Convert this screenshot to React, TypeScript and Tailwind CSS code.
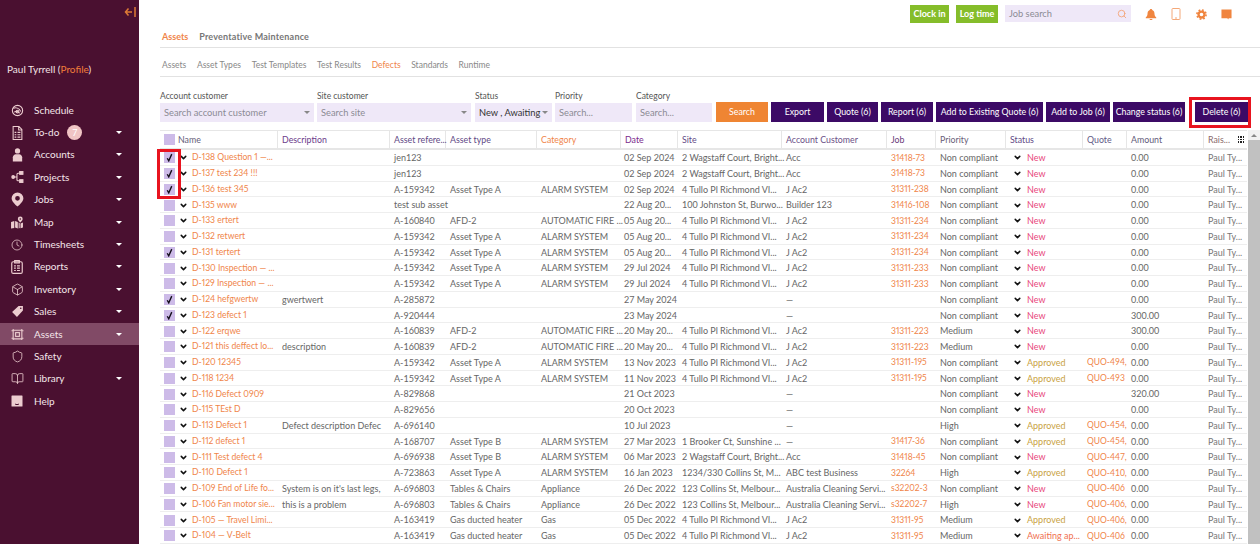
import { BookOpen, Box, ChevronDown, Clock, Search, Shield } from "lucide-react";

const orange = "text-[#f0854a]";

const gridCols =
  "grid grid-cols-[118px_112px_56px_91px_84px_57px_104px_105px_49px_70px_77px_44px_77px_43px]";

function ScheduleIcon() {
  return (
    <svg width="13" height="13" viewBox="0 0 24 24" fill="none" stroke="currentColor" strokeWidth="2">
      <circle cx="12" cy="12" r="9.500" />
      <path d="M4 8c5-2 11 0 14 6M6 15c3-2 7-2 10 2" />
      <circle cx="12" cy="14" r="2.500" />
    </svg>
  );
}

function TodoIcon() {
  return (
    <svg width="11" height="14" viewBox="0 0 18 24" fill="none" stroke="currentColor" strokeWidth="1.800">
      <path d="M1.500 1h10l5 5v17h-15zM11 1v6h5.500" />
      <path d="M4 11h3M9 11h5M4 15h3M9 15h5M4 19h3M9 19h5" strokeWidth="2" />
    </svg>
  );
}

function PersonIcon() {
  return (
    <svg width="11" height="14" viewBox="0 0 18 24" fill="currentColor">
      <circle cx="9" cy="5" r="4.500" />
      <path d="M1 23v-7c0-3 2.500-5.500 5-5.500h6c2.500 0 5 2.500 5 5.500v7z" />
    </svg>
  );
}

function ProjectsIcon() {
  return (
    <svg width="13" height="12" viewBox="0 0 24 22" fill="none" stroke="currentColor" strokeWidth="2">
      <path d="M5 11h5M16 4h-3a2 2 0 0 0-2 2v10a2 2 0 0 0 2 2h3" />
      <circle cx="4" cy="11" r="2.500" fill="currentColor" />
      <rect x="16" y="1" width="6" height="5" fill="currentColor" />
      <rect x="16" y="16" width="6" height="5" fill="currentColor" />
    </svg>
  );
}

function PinIcon() {
  return (
    <svg width="13" height="15" viewBox="0 0 22 24" fill="currentColor">
      <path fillRule="evenodd" d="M11 0a10 10 0 0 0-10 10c0 6.500 10 14 10 14s10-7.500 10-14a10 10 0 0 0-10-10zm0 6a4 4 0 1 1 0 8 4 4 0 0 1 0-8z" />
    </svg>
  );
}

function MapPinsIcon() {
  return (
    <svg width="14" height="13" viewBox="0 0 24 24" fill="currentColor">
      <path d="M1 11l6-2v13l-6 1zM8.500 9l5 2v12l-5-2zM15 12l2 1v9l-2 1zM18.500 14l4.500-2v9l-4.500 1.500z" />
      <path fillRule="evenodd" d="M18 1a4.500 4.500 0 0 0-4.500 4.500c0 3 4.500 6.500 4.500 6.500s4.500-3.500 4.500-6.500A4.500 4.500 0 0 0 18 1zm0 3a1.500 1.500 0 1 1 0 3 1.500 1.500 0 0 1 0-3z" />
    </svg>
  );
}

function ReportIcon() {
  return (
    <svg width="12" height="14" viewBox="0 0 20 24" fill="none" stroke="currentColor" strokeWidth="2">
      <rect x="1" y="3" width="18" height="20" rx="2.500" />
      <path d="M6 1h8v4H6zM5 10h3M10 10h5M5 14h3M10 14h5M5 18h3M10 18h5" />
    </svg>
  );
}

function TagIcon() {
  return (
    <svg width="13" height="13" viewBox="0 0 24 24" fill="currentColor">
      <path fillRule="evenodd" d="M14 2h8v8L11 22 2 13zm4 2.500a1.500 1.500 0 1 0 0 3 1.500 1.500 0 0 0 0-3z" />
    </svg>
  );
}

function AssetsIcon() {
  return (
    <svg width="13" height="13" viewBox="0 0 24 24" fill="none" stroke="currentColor" strokeWidth="2">
      <path d="M1 5h3M1 19h3M20 5h3M20 19h3M4 2v20M20 2v20M4 4h16M4 20h16" />
      <rect x="8.500" y="8.500" width="7" height="7" />
    </svg>
  );
}

function HelpIcon() {
  return (
    <svg width="12" height="12" viewBox="0 0 24 24" fill="currentColor">
      <path d="M2 1h20a1 1 0 0 1 1 1v20a1 1 0 0 1-1 1H2a1 1 0 0 1-1-1V2a1 1 0 0 1 1-1z" />
      <path d="M8 18c2 1.500 6 1.500 8 0" fill="none" stroke="#4a1030" strokeWidth="2" />
    </svg>
  );
}

const navItems = [
  { label: "Schedule", icon: <ScheduleIcon />, caret: false },
  { label: "To-do", icon: <TodoIcon />, caret: true, badge: "7" },
  { label: "Accounts", icon: <PersonIcon />, caret: true },
  { label: "Projects", icon: <ProjectsIcon />, caret: true },
  { label: "Jobs", icon: <PinIcon />, caret: true },
  { label: "Map", icon: <MapPinsIcon />, caret: true },
  { label: "Timesheets", icon: <Clock size={12} strokeWidth={1.5} />, caret: true },
  { label: "Reports", icon: <ReportIcon />, caret: true },
  { label: "Inventory", icon: <Box size={13} strokeWidth={1.5} />, caret: true },
  { label: "Sales", icon: <TagIcon />, caret: true },
  { label: "Assets", icon: <AssetsIcon />, caret: true, active: true },
  { label: "Safety", icon: <Shield size={13} strokeWidth={1.5} />, caret: false },
  { label: "Library", icon: <BookOpen size={13} strokeWidth={1.5} />, caret: true },
  { label: "Help", icon: <HelpIcon />, caret: false },
];

type Row = {
  name: string;
  desc?: string;
  ref: string;
  type?: string;
  cat?: string;
  date: string;
  site?: string;
  acc?: string;
  job?: string;
  pri: string;
  status: string;
  quote?: string;
  amount: string;
  checked?: boolean;
};

const wag = "2 Wagstaff Court, Bright...";
const tullo = "4 Tullo Pl Richmond VI...";
const collins = "123 Collins St, Melbour...";
const nc = "Non compliant";
const alarm = "ALARM SYSTEM";

const rows: Row[] = [
  { name: "D-138 Question 1 —...", ref: "jen123", date: "02 Sep 2024", site: wag, acc: "Acc", job: "31418-73", pri: nc, status: "New", amount: "0.00", checked: true },
  { name: "D-137 test 234 !!!", ref: "jen123", date: "02 Sep 2024", site: wag, acc: "Acc", job: "31418-73", pri: nc, status: "New", amount: "0.00", checked: true },
  { name: "D-136 test 345", ref: "A-159342", type: "Asset Type A", cat: alarm, date: "02 Sep 2024", site: tullo, acc: "J Ac2", job: "31311-238", pri: nc, status: "New", amount: "0.00", checked: true },
  { name: "D-135 www", ref: "test sub asset", date: "22 Aug 20...", site: "100 Johnston St, Burwo...", acc: "Builder 123", job: "31416-108", pri: nc, status: "New", amount: "0.00" },
  { name: "D-133 ertert", ref: "A-160840", type: "AFD-2", cat: "AUTOMATIC FIRE ...", date: "05 Aug 20...", site: tullo, acc: "J Ac2", job: "31311-234", pri: nc, status: "New", amount: "0.00" },
  { name: "D-132 retwert", ref: "A-159342", type: "Asset Type A", cat: alarm, date: "05 Aug 20...", site: tullo, acc: "J Ac2", job: "31311-234", pri: nc, status: "New", amount: "0.00" },
  { name: "D-131 tertert", ref: "A-159342", type: "Asset Type A", cat: alarm, date: "05 Aug 20...", site: tullo, acc: "J Ac2", job: "31311-234", pri: nc, status: "New", amount: "0.00", checked: true },
  { name: "D-130 Inspection — ...", ref: "A-159342", type: "Asset Type A", cat: alarm, date: "29 Jul 2024", site: tullo, acc: "J Ac2", job: "31311-233", pri: nc, status: "New", amount: "0.00" },
  { name: "D-129 Inspection — ...", ref: "A-159342", type: "Asset Type A", cat: alarm, date: "29 Jul 2024", site: tullo, acc: "J Ac2", job: "31311-233", pri: nc, status: "New", amount: "0.00" },
  { name: "D-124 hefgwertw", desc: "gwertwert", ref: "A-285872", date: "27 May 2024", acc: "—", pri: nc, status: "New", amount: "0.00", checked: true },
  { name: "D-123 defect 1", ref: "A-920444", date: "23 May 2024", acc: "—", pri: nc, status: "New", amount: "300.00", checked: true },
  { name: "D-122 erqwe", ref: "A-160839", type: "AFD-2", cat: "AUTOMATIC FIRE ...", date: "20 May 20...", site: tullo, acc: "J Ac2", job: "31311-223", pri: "Medium", status: "New", amount: "300.00" },
  { name: "D-121 this deffect lo...", desc: "description", ref: "A-160839", type: "AFD-2", cat: "AUTOMATIC FIRE ...", date: "20 May 20...", site: tullo, acc: "J Ac2", job: "31311-223", pri: "Medium", status: "New", amount: "0.00" },
  { name: "D-120 12345", ref: "A-159342", type: "Asset Type A", cat: alarm, date: "13 Nov 2023", site: tullo, acc: "J Ac2", job: "31311-195", pri: nc, status: "Approved", quote: "QUO-494,", amount: "0.00" },
  { name: "D-118 1234", ref: "A-159342", type: "Asset Type A", cat: alarm, date: "11 Nov 2023", site: tullo, acc: "J Ac2", job: "31311-195", pri: nc, status: "Approved", quote: "QUO-493", amount: "0.00" },
  { name: "D-116 Defect 0909", ref: "A-829868", date: "21 Oct 2023", acc: "—", pri: nc, status: "New", amount: "320.00" },
  { name: "D-115 TEst D", ref: "A-829656", date: "20 Oct 2023", acc: "—", pri: nc, status: "New", amount: "0.00" },
  { name: "D-113 Defect 1", desc: "Defect description Defec", ref: "A-696140", date: "10 Jul 2023", acc: "—", pri: "High", status: "Approved", quote: "QUO-454,", amount: "0.00" },
  { name: "D-112 defect 1", ref: "A-168707", type: "Asset Type B", cat: alarm, date: "27 Mar 2023", site: "1 Brooker Ct, Sunshine ...", acc: "—", job: "31417-36", pri: nc, status: "Approved", quote: "QUO-454,", amount: "0.00" },
  { name: "D-111 Test defect 4", ref: "A-696938", type: "Asset Type B", cat: alarm, date: "06 Mar 2023", site: wag, acc: "Acc", job: "31418-45", pri: nc, status: "New", quote: "QUO-447,", amount: "0.00" },
  { name: "D-110 Defect 1", ref: "A-723863", type: "Asset Type A", cat: alarm, date: "16 Jan 2023", site: "1234/330 Collins St, M...", acc: "ABC test Business", job: "32264", pri: "High", status: "Approved", quote: "QUO-410,", amount: "0.00" },
  { name: "D-109 End of Life fo...", desc: "System is on it's last legs,", ref: "A-696803", type: "Tables & Chairs", cat: "Appliance", date: "26 Dec 2022", site: collins, acc: "Australia Cleaning Servi...", job: "s32202-3", pri: nc, status: "New", quote: "QUO-406", amount: "0.00" },
  { name: "D-106 Fan motor sie...", desc: "this is a problem", ref: "A-696803", type: "Tables & Chairs", cat: "Appliance", date: "26 Dec 2022", site: collins, acc: "Australia Cleaning Servi...", job: "s32202-7", pri: "High", status: "New", quote: "QUO-406,", amount: "0.00" },
  { name: "D-105 — Travel Limi...", ref: "A-163419", type: "Gas ducted heater", cat: "Gas", date: "05 Dec 2022", site: tullo, acc: "J Ac2", job: "31311-95", pri: "Medium", status: "Approved", quote: "QUO-406,", amount: "0.00" },
  { name: "D-104 — V-Belt", ref: "A-163419", type: "Gas ducted heater", cat: "Gas", date: "05 Dec 2022", site: tullo, acc: "J Ac2", job: "31311-95", pri: "Medium", status: "Awaiting ap...", quote: "QUO-406", amount: "0.00" },
];

const statusColor: Record<string, string> = {
  New: "text-[#e8487c]",
  Approved: "text-[#c9a23f]",
  "Awaiting ap...": "text-[#f0704f]",
};

const headers = [
  { label: "Asset refere...", color: "text-[#5f4a86]" },
  { label: "Asset type", color: "text-[#5f4a86]" },
  { label: "Category", color: orange },
  { label: "Date", color: "text-[#7b2a8c]" },
  { label: "Site", color: "text-[#5f4a86]" },
  { label: "Account Customer", color: "text-[#6b4f86]" },
  { label: "Job", color: "text-[#6b3a7a]" },
  { label: "Priority", color: "text-[#6b6078]" },
  { label: "Status", color: "text-[#5f4a86]" },
  { label: "Quote", color: "text-[#5f5a86]" },
  { label: "Amount", color: "text-[#5f5a7a]" },
];

function Box2({ checked }: { checked?: boolean }) {
  return (
    <span className="flex h-[11px] w-[11px] shrink-0 items-center justify-center bg-[#cdbbe8]">
      {checked && (
        <svg width="9" height="9" viewBox="0 0 12 12" fill="none" stroke="#15101c" strokeWidth="1.800">
          <path d="M3 7l2 3.500L9 1.500" />
        </svg>
      )}
    </span>
  );
}

function Caret() {
  return <span className="block h-0 w-0 border-x-[3.500px] border-t-[3.500px] border-x-transparent border-t-white" />;
}

function Field({ label, placeholder, width, caret, dark }: { label: string; placeholder: string; width: string; caret?: boolean; dark?: boolean }) {
  return (
    <div className={`flex flex-col ${width}`}>
      <span className="mb-[1px] h-[12px] text-[8.500px] leading-[12px] text-[#555]">{label}</span>
      <div className="flex h-[19px] items-center justify-between bg-[#efe8f8] px-[4px]">
        <span className={`whitespace-nowrap text-[9.300px] ${dark ? "text-[#333]" : "text-[#8b8b94]"}`}>{placeholder}</span>
        {caret && <span className="h-0 w-0 shrink-0 border-x-[3px] border-t-[3px] border-x-transparent border-t-[#888]" />}
      </div>
    </div>
  );
}

function ActionButton({ children, width }: { children: string; width: string }) {
  return (
    <button className={`flex h-[20px] items-center justify-center whitespace-nowrap bg-[#3c0a66] text-[8.800px] text-white ${width}`}>
      {children}
    </button>
  );
}

export default function App() {
  return (
    <div className="flex h-[544px] w-[1260px] overflow-hidden bg-white font-['Lato',sans-serif]">
      {/* Sidebar */}
      <aside className="flex w-[139px] shrink-0 flex-col bg-[#4a1030] text-[#eccccf]">
        <div className="flex h-[24px] items-center justify-end pr-[3px]">
          <svg width="12" height="10" viewBox="0 0 12 10" fill="none" stroke="#dd7a35" strokeWidth="1.500">
            <path d="M8 5H1.500M4.500 1.500L1.500 5l3 3.500" />
            <path d="M11 0v10" />
          </svg>
        </div>
        <div className="mt-[38px] h-[14px] pl-[7px] text-[10px] leading-[14px] text-[#f3e3e6]">
          Paul Tyrrell (<span className="text-[#ef7d3a]">Profile</span>)
        </div>
        <nav className="mt-[23px] flex flex-col">
          {navItems.map((item) => (
            <div
              key={item.label}
              className={`flex h-[22.400px] items-center pl-[9px] pr-[17px] ${item.active ? "bg-[#814a66]" : ""}`}
            >
              <span className="mr-[9px] flex w-[16px] shrink-0 justify-center">{item.icon}</span>
              <span className="text-[10px] text-[#f4e6ea]">{item.label}</span>
              {item.badge && (
                <span className="ml-[8px] flex h-[15px] w-[15px] items-center justify-center rounded-full bg-[#f0c4c4] text-[9px] text-white">
                  {item.badge}
                </span>
              )}
              <span className="ml-auto flex">{item.caret && <Caret />}</span>
            </div>
          ))}
        </nav>
      </aside>

      {/* Main */}
      <main className="relative flex min-w-0 flex-1 flex-col pl-[21px]">
        <div className="flex h-[28px] items-start justify-end pr-[28px] pt-[5px]">
          <button className="flex h-[18px] w-[39px] items-center justify-center bg-[#85bd2a] text-[9px] font-bold text-white">Clock in</button>
          <button className="ml-[7px] flex h-[18px] w-[42px] items-center justify-center bg-[#85bd2a] text-[9px] font-bold text-white">Log time</button>
          <div className="ml-[7px] flex h-[17px] w-[126px] items-center justify-between bg-[#efe8f8] px-[4px]">
            <span className="text-[9.300px] text-[#8b8b94]">Job search</span>
            <Search size={10} className="text-[#f4a070]" />
          </div>
          <div className="ml-[14px] flex h-[18px] w-[87px] items-center justify-between text-[#f0853f]">
            <svg width="12" height="11" viewBox="0 0 24 22" fill="currentColor">
              <path d="M12 0c1.500 0 2.500 1 2.500 2.200C18 3.500 19 6.500 19 10c0 3 1.500 5 3.500 7v1.500h-21V17c2-2 3.500-4 3.500-7 0-3.500 1-6.500 4.500-7.800C9.500 1 10.500 0 12 0zM9 20h6c0 1.200-1.300 2-3 2s-3-.8-3-2z" />
            </svg>
            <svg width="10" height="12" viewBox="0 0 20 24" fill="none" stroke="#f4a878" strokeWidth="2">
              <rect x="2" y="1" width="16" height="22" rx="1.500" />
              <path d="M8 20h4" />
            </svg>
            <svg width="11" height="11" viewBox="0 0 24 24" fill="none" stroke="currentColor">
              <circle cx="12" cy="12" r="6.500" strokeWidth="5" />
              <circle cx="12" cy="12" r="10" strokeWidth="3.500" strokeDasharray="3.850 4" />
            </svg>
            <svg width="11" height="11" viewBox="0 0 24 24" fill="currentColor">
              <path d="M1 1h22v19h-6l-1.500 3-1.500-3H1z" />
            </svg>
          </div>
        </div>

        <div className="flex h-[20px] items-start gap-[11px] border-b border-[#e2e2e2] pl-[2px] pt-[2px] text-[9px] font-bold">
          <span className={orange}>Assets</span>
          <span className="tracking-[0.2px] text-[#777]">Preventative Maintenance</span>
        </div>
        <div className="flex h-[29px] items-center gap-[10.600px] border-b border-[#e2e2e2] pl-[2px] pt-[6px] text-[8.500px] text-[#888]">
          <span>Assets</span>
          <span>Asset Types</span>
          <span>Test Templates</span>
          <span>Test Results</span>
          <span className={orange}>Defects</span>
          <span>Standards</span>
          <span>Runtime</span>
        </div>

        {/* Filters */}
        <div className="mt-[13px] flex h-[32px] items-end">
          <Field label="Account customer" placeholder="Search account customer" width="w-[154px]" caret />
          <div className="w-[3px]" />
          <Field label="Site customer" placeholder="Search site" width="w-[154px]" caret />
          <div className="w-[4px]" />
          <Field label="Status" placeholder="New , Awaiting" width="w-[77px]" caret dark />
          <div className="w-[3px]" />
          <Field label="Priority" placeholder="Search..." width="w-[77px]" />
          <div className="w-[4px]" />
          <Field label="Category" placeholder="Search..." width="w-[76px]" />
          <div className="flex items-center gap-[3px] pl-[4px]">
            <button className="flex h-[20px] w-[52px] items-center justify-center bg-[#ef8533] text-[8.800px] text-white">Search</button>
            <ActionButton width="w-[53px]">Export</ActionButton>
            <ActionButton width="w-[51px]">Quote (6)</ActionButton>
            <ActionButton width="w-[52px]">Report (6)</ActionButton>
            <ActionButton width="w-[107px]">Add to Existing Quote (6)</ActionButton>
            <ActionButton width="w-[64px]">Add to Job (6)</ActionButton>
            <ActionButton width="w-[72px]">Change status (6)</ActionButton>
            <div className="w-[4px]" />
            <ActionButton width="w-[53px]">Delete (6)</ActionButton>
          </div>
        </div>

        {/* Table */}
        <div className="mt-[8px] flex min-h-0 flex-1">
          <div className="w-[1087px] shrink-0">
            <div className={`${gridCols} h-[20px] border-b-2 border-t border-[#e6e6e6] text-[8.800px]`}>
              <div className="flex items-center gap-[3px] border-r border-[#e6e6e6] pl-[4px] text-[#66607a]">
                <Box2 />
                <span>Name</span>
              </div>
              <div className="flex items-center border-r border-[#e6e6e6] pl-[4px] text-[#6b3a8a]">Description</div>
              {headers.map((h) => (
                <div key={h.label} className={`flex items-center whitespace-nowrap border-r border-[#e6e6e6] pl-[4px] ${h.color}`}>
                  {h.label}
                </div>
              ))}
              <div className="flex items-center justify-between pl-[4px] pr-[3px] text-[#8a6a6a]">
                <span>Rais...</span>
                <span className="grid grid-cols-3 gap-[1px]">
                  {Array.from({ length: 9 }).map((_, i) => (
                    <span key={i} className="h-[1.500px] w-[1.500px] bg-[#222]" />
                  ))}
                </span>
              </div>
            </div>
            {rows.map((r) => (
              <div key={r.name} className={`${gridCols} h-[15.750px] items-center whitespace-nowrap border-b border-[#eeeeee] pt-[1px] text-[9px] text-[#666]`}>
                <div className="flex items-center pl-[4px]">
                  <Box2 checked={r.checked} />
                  <ChevronDown size={9} strokeWidth={4} className="ml-[4px] shrink-0 text-[#111]" />
                  <span className={`ml-[4px] text-[8.600px] proportional-nums ${orange}`}>{r.name}</span>
                </div>
                <div className="overflow-hidden pl-[4px]">{r.desc}</div>
                <div className="pl-[4px]">{r.ref}</div>
                <div className="pl-[4px]">{r.type}</div>
                <div className="pl-[4px]">{r.cat}</div>
                <div className="pl-[3px]">{r.date}</div>
                <div className="pl-[4px]">{r.site}</div>
                <div className="pl-[4px]">{r.acc}</div>
                <div className={`pl-[4px] text-[8.500px] proportional-nums ${orange}`}>{r.job}</div>
                <div className="pl-[4px]">{r.pri}</div>
                <div className="flex items-center pl-[7px]">
                  <ChevronDown size={9} strokeWidth={4} className="shrink-0 text-[#111]" />
                  <span className={`ml-[5px] ${statusColor[r.status]}`}>{r.status}</span>
                </div>
                <div className={`pl-[4px] text-[8.500px] ${orange}`}>{r.quote}</div>
                <div className="pl-[4px]">{r.amount}</div>
                <div className="pl-[4px] text-[#777]">Paul Ty...</div>
              </div>
            ))}
          </div>
          <div className="ml-[1px] flex w-[12px] flex-col items-center bg-[#f1f1f1]">
            <span className="mt-[4px] h-0 w-0 border-x-[3px] border-b-[3px] border-x-transparent border-b-[#888]" />
            <div className="mt-[3px] w-full flex-1 bg-[#c1c1c1]" />
          </div>
        </div>

        {/* Red annotation boxes */}
        <div className="pointer-events-none absolute left-[18px] top-[149px] h-[50px] w-[24px] border-[3px] border-[#e8141f]" />
        <div className="pointer-events-none absolute left-[1050px] top-[97px] h-[31px] w-[62px] border-[3px] border-[#e8141f]" />
      </main>
    </div>
  );
}
